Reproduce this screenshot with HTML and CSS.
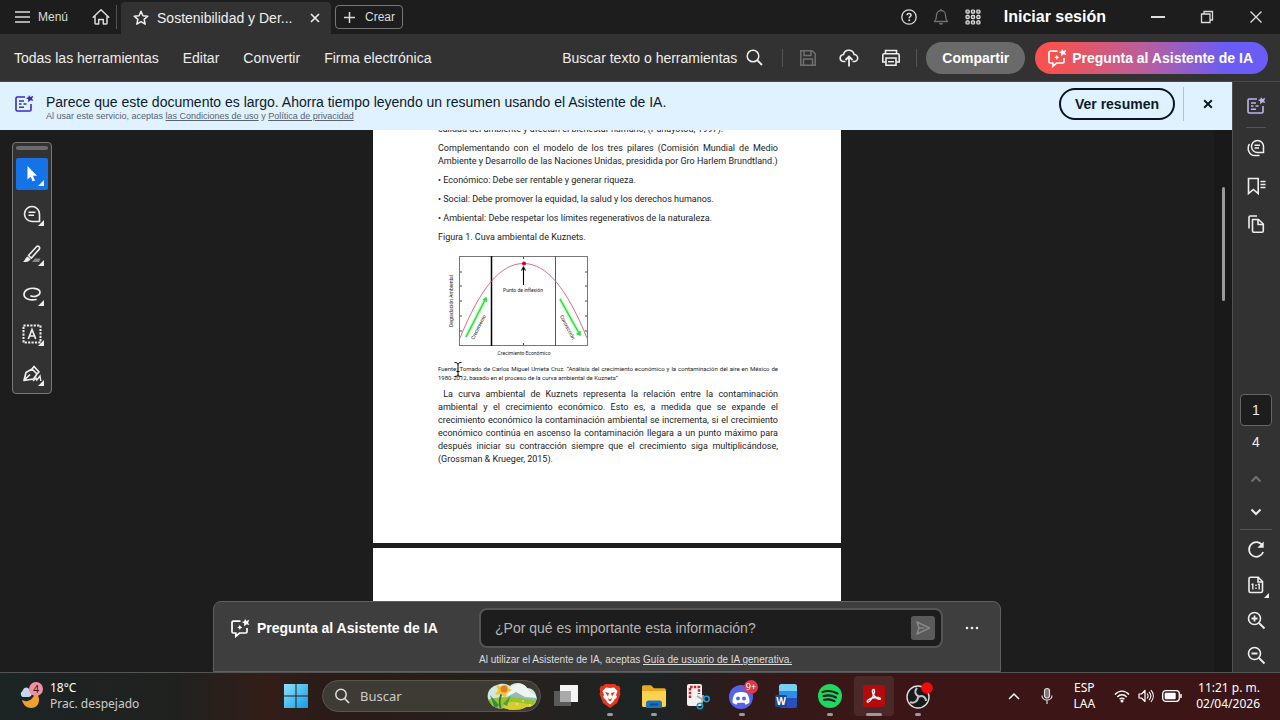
FILE: index.html
```html
<!DOCTYPE html>
<html lang="es">
<head>
  <meta charset="UTF-8">
  <meta name="viewport" content="width=device-width, initial-scale=1.0">
  <title>Sostenibilidad y Derecho</title>
  <link rel="stylesheet" href="styles.css">
</head>
<body>
  <svg width="0" height="0" class="defs">
    <symbol id="chat-ai" viewBox="0 0 20 20">
      <path d="M10.5 3.2H3.2c-.7 0-1.2.5-1.2 1.2v9.4c0 .7.500 1.200 1.200 1.200h2.600v3.300l3.700-3.300h6.300c.7 0 1.200-.5 1.200-1.200V10" fill="none" stroke="currentColor" stroke-width="1.700"/>
      <path d="M15 .8l1.300 2.200 3-1.200-1.200 2.900 1.300 2.300-2.800-.8-2.300 2-.2-2.900-2.300-1.200 2.500-.8z" fill="currentColor"/>
      <path d="M9.800 6.800l.8 1.800 1.800.8-1.800.8-.8 1.800-.8-1.800-1.800-.8 1.800-.8z" fill="currentColor"/>
    </symbol>
    <symbol id="summary-ai" viewBox="0 0 20 20">
      <path d="M11 3H3.200C2.500 3 2 3.500 2 4.200v11.600c0 .7.500 1.200 1.200 1.200h12.600c.7 0 1.200-.5 1.200-1.200V10" fill="none" stroke="currentColor" stroke-width="1.600"/>
      <path d="M5 7h5M5 10h2.500M9.500 10h3M5 13.300h5" fill="none" stroke="currentColor" stroke-width="1.500"/>
      <path d="M15 1l1.300 2 3-1.200-1.200 2.900 1.300 2.300-2.800-.8-2.300 2-.2-2.900-2.300-1.200 2.500-.8z" fill="currentColor"/>
    </symbol>
  </svg>

  <header class="titlebar">
    <button class="menu-btn" type="button">
      <svg width="15" height="14" viewBox="0 0 15 14"><path d="M0 2h15M0 7h15M0 12h15" stroke="currentColor" stroke-width="1.500"/></svg>
      Menú
    </button>
    <button class="home-btn" type="button" aria-label="Inicio">
      <svg width="18" height="18" viewBox="0 0 18 18"><path d="M1.200 9.200L9 1.800l7.800 7.400M3 8v7.300c0 .4.300.7.700.7h3v-4.500h4.600V16h3c.4 0 .7-.3.700-.7V8" fill="none" stroke="currentColor" stroke-width="1.500" stroke-linejoin="round" stroke-linecap="round"/></svg>
    </button>
    <div class="tab">
      <svg width="16" height="16" viewBox="0 0 16 16"><path d="M8 1.300l1.900 4.500 4.900.4-3.700 3.200 1.100 4.800L8 11.700l-4.200 2.500 1.100-4.800L1.200 6.200l4.900-.4z" fill="none" stroke="currentColor" stroke-width="1.500" stroke-linejoin="round"/></svg>
      <span class="tab-title">Sostenibilidad y Der...</span>
      <button type="button" aria-label="Cerrar pestaña">
        <svg width="10" height="10" viewBox="0 0 10 10"><path d="M1 1l8 8M9 1L1 9" stroke="currentColor" stroke-width="1.600"/></svg>
      </button>
    </div>
    <button class="create-btn" type="button">
      <svg width="11" height="11" viewBox="0 0 11 11"><path d="M5.500 0v11M0 5.500h11" stroke="currentColor" stroke-width="1.500"/></svg>
      Crear
    </button>
    <div class="title-actions">
      <button type="button" aria-label="Ayuda">
        <svg width="16" height="16" viewBox="0 0 16 16"><circle cx="8" cy="8" r="7.200" fill="none" stroke="currentColor" stroke-width="1.300"/><path d="M6 6.300C6.100 5 7 4.500 8 4.500s2 .6 2 1.700C10 7.500 8.200 7.600 8.200 9.200" fill="none" stroke="currentColor" stroke-width="1.500"/><circle cx="8.200" cy="11.300" r="1" fill="currentColor"/></svg>
      </button>
      <button class="dim" type="button" aria-label="Notificaciones">
        <svg width="16" height="18" viewBox="0 0 16 18"><path d="M8 1v1.500M1.500 13.500h13c-1.500-1.500-2-2.500-2-6C12.500 4.500 10.500 2.500 8 2.500s-4.500 2-4.500 5c0 3.500-.5 4.500-2 6z" fill="none" stroke="currentColor" stroke-width="1.300" stroke-linejoin="round"/><path d="M6 15h4c-.2 1.200-1 1.800-2 1.800S6.200 16.200 6 15z" fill="currentColor"/></svg>
      </button>
      <button type="button" aria-label="Aplicaciones">
        <svg width="16" height="16" viewBox="0 0 16 16"><g fill="#666" stroke="currentColor" stroke-width="1.200"><rect x="1" y="1" width="3.200" height="3.200" rx="1"/><rect x="6.400" y="1" width="3.200" height="3.200" rx="1"/><rect x="11.800" y="1" width="3.200" height="3.200" rx="1"/><rect x="1" y="6.400" width="3.200" height="3.200" rx="1"/><rect x="6.400" y="6.400" width="3.200" height="3.200" rx="1"/><rect x="11.800" y="6.400" width="3.200" height="3.200" rx="1"/><rect x="1" y="11.800" width="3.200" height="3.200" rx="1"/><rect x="6.400" y="11.800" width="3.200" height="3.200" rx="1"/><rect x="11.800" y="11.800" width="3.200" height="3.200" rx="1"/></g></svg>
      </button>
    </div>
    <a class="login" href="#">Iniciar sesión</a>
    <div class="window-controls">
      <button type="button" aria-label="Minimizar"><svg width="14" height="14" viewBox="0 0 14 14"><path d="M0 7h14" stroke="currentColor" stroke-width="2"/></svg></button>
      <button type="button" aria-label="Restaurar"><svg width="14" height="14" viewBox="0 0 14 14"><path d="M1.500 4h8.500v8.500H1.500zM4 4V1.500h8.500V10H10" fill="none" stroke="currentColor" stroke-width="1.300"/></svg></button>
      <button type="button" aria-label="Cerrar"><svg width="12" height="12" viewBox="0 0 12 12"><path d="M.5.500l11 11M11.500.500l-11 11" stroke="currentColor" stroke-width="1.400"/></svg></button>
    </div>
  </header>

  <div class="toolbar">
    <nav>
      <a href="#">Todas las herramientas</a>
      <a href="#">Editar</a>
      <a href="#">Convertir</a>
      <a href="#">Firma electrónica</a>
    </nav>
    <button class="find-btn" type="button">
      Buscar texto o herramientas
      <svg width="17" height="17" viewBox="0 0 17 17"><circle cx="7" cy="7" r="5.800" fill="none" stroke="currentColor" stroke-width="1.500"/><path d="M11.200 11.200L16 16" stroke="currentColor" stroke-width="1.800"/></svg>
    </button>
    <div class="tool-actions">
      <button class="dim" type="button" aria-label="Guardar">
        <svg width="18" height="18" viewBox="0 0 18 18"><path d="M1.800 1.800h11.400l3 3v11.400H1.800zM5 2v4.500h7V2M4.500 16v-6h9v6" fill="none" stroke="currentColor" stroke-width="1.500"/></svg>
      </button>
      <button type="button" aria-label="Subir">
        <svg width="20" height="18" viewBox="0 0 20 18"><path d="M6.500 12.500H4.800a3.500 3.500 0 0 1-.3-7C5 3 7.200 1.200 9.800 1.200c2.700 0 4.800 1.700 5.300 4.300a3.500 3.500 0 0 1 .1 7h-1.700" fill="none" stroke="currentColor" stroke-width="1.600"/><path d="M10 17.500V8M6.500 11L10 7.500l3.500 3.500" fill="none" stroke="currentColor" stroke-width="1.800"/></svg>
      </button>
      <button type="button" aria-label="Imprimir">
        <svg width="20" height="18" viewBox="0 0 20 18"><path d="M4.500 4.500V1.500h11v3M4.500 13H1.800V6.200c0-.8.600-1.400 1.400-1.400h13.600c.8 0 1.400.6 1.400 1.400V13h-2.700M5 9h10v7.200H5z" fill="none" stroke="currentColor" stroke-width="1.600"/><path d="M7 12.700h6" stroke="currentColor" stroke-width="1.400"/></svg>
      </button>
    </div>
    <button class="pill share" type="button">Compartir</button>
    <button class="pill ask-ai" type="button"><svg width="20" height="20"><use href="#chat-ai"/></svg>Pregunta al Asistente de IA</button>
  </div>

  <main>
    <div class="content">
      <section class="banner">
        <svg width="20" height="20"><use href="#summary-ai"/></svg>
        <div class="banner-text">
          <p>Parece que este documento es largo. Ahorra tiempo leyendo un resumen usando el Asistente de IA.</p>
          <small>Al usar este servicio, aceptas <a href="#">las Condiciones de uso</a> y <a href="#">Política de privacidad</a></small>
        </div>
        <button class="resume-btn" type="button">Ver resumen</button>
        <button class="banner-close" type="button" aria-label="Cerrar aviso">
          <svg width="10" height="10" viewBox="0 0 10 10"><path d="M1.200 1.200l7.600 7.600M8.800 1.200L1.200 8.800" stroke="currentColor" stroke-width="2"/></svg>
        </button>
      </section>

      <section class="viewer">
        <div class="pages">
          <article class="page first">
            <p>calidad del ambiente y afectan el bienestar humano, (Panayotou, 1997).</p>
            <p>Complementando con el modelo de los tres pilares (Comisión Mundial de Medio Ambiente y Desarrollo de las Naciones Unidas, presidida por Gro Harlem Brundtland.)</p>
            <p>• Económico: Debe ser rentable y generar riqueza.</p>
            <p>• Social: Debe promover la equidad, la salud y los derechos humanos.</p>
            <p>• Ambiental: Debe respetar los límites regenerativos de la naturaleza.</p>
            <p>Figura 1. Cuva ambiental de Kuznets.</p>
            <figure>
              <svg class="chart" width="156" height="108" viewBox="0 2 156 108">
                <rect x="21.500" y="8.500" width="128" height="89" fill="none" stroke="#777"/>
                <path d="M22 24h2M22 38h2M22 53h2M22 68h2M22 83h2M147 24h2M147 38h2M147 53h2M147 68h2M147 83h2M85.500 9v2M85.500 95v2" stroke="#444"/>
                <path d="M53.500 8v90" stroke="#000" stroke-width="1.500"/>
                <path d="M117.500 8v90" stroke="#555"/>
                <path d="M22 90C42 41 62 15.500 85.500 15.500S129 41 149 90" fill="none" stroke="#d0607a" stroke-width=".9"/>
                <circle cx="86" cy="15.500" r="2" fill="#d4002a"/>
                <path d="M85.500 37V20M83.500 22.500l2-3.500 2 3.500" fill="none" stroke="#000" stroke-width="1.100"/>
                <g fill="none" stroke="#bdfcbd" stroke-width="3.500"><path d="M28 89L48 50M122 51l20 36"/></g>
                <g fill="none" stroke="#2cdb3c" stroke-width="1.400"><path d="M28 89L48 50M45 52l3-2 .5 4M122 51l20 36M142 83v4l-3.500-1.500"/></g>
                <text x="85" y="44" text-anchor="middle">Punto de inflexión</text>
                <text x="86" y="107" text-anchor="middle">Crecimiento Económico</text>
                <text transform="translate(15 53) rotate(-90)" text-anchor="middle">Degradación Ambiental</text>
                <text transform="translate(42 80) rotate(-63)" text-anchor="middle">Crecimiento</text>
                <text transform="translate(128 80) rotate(62)" text-anchor="middle">Contracción</text>
              </svg>
              <figcaption>Fuente: Tomado de Carlos Miguel Urrieta Cruz. “Análisis del crecimiento económico y la contaminación del aire en México de 1980-2012, basado en el proceso de la curva ambiental de Kuznets”</figcaption>
            </figure>
            <p>&nbsp;La curva ambiental de Kuznets representa la relación entre la contaminación ambiental y el crecimiento económico. Esto es, a medida que se expande el crecimiento económico la contaminación ambiental se incrementa, si el crecimiento económico continúa en ascenso la contaminación llegara a un punto máximo para después iniciar su contracción siempre que el crecimiento siga multiplicándose, (Grossman &amp; Krueger, 2015).</p>
            <svg class="cursor" width="8" height="15" viewBox="0 0 8 15"><path d="M.5.500C2.500.500 4 1 4 2.500 4 1 5.500.500 7.500.500M4 2.500v10M.5 14.500c2 0 3.500-.5 3.500-2 0 1.500 1.500 2 3.500 2M2.500 9.500h3" fill="none" stroke="#000"/></svg>
          </article>
          <article class="page next"></article>
        </div>
        <div class="scrollbar"><div class="thumb"></div></div>

        <aside class="toolbox">
          <div class="grip"></div>
          <button class="active" type="button" aria-label="Seleccionar"><svg width="20" height="20" viewBox="0 0 20 20"><path d="M5.500 2v13.500l3.200-2.800 2 4.800 2.300-1-2-4.700h4z" fill="currentColor"/></svg></button>
          <button type="button" aria-label="Comentar"><svg width="20" height="20" viewBox="0 0 20 20"><path d="M10 2.500a7.500 7.500 0 1 0 0 15h7.500V10A7.500 7.500 0 0 0 10 2.500zM6.500 8.300h7M6.500 11.300h5.500" fill="none" stroke="currentColor" stroke-width="1.600"/></svg></button>
          <button type="button" aria-label="Resaltar"><svg width="20" height="20" viewBox="0 0 20 20"><path d="M10 18l3-3.500h5.500L17 18z" fill="#888"/><path d="M6.500 11.500l8-8.800c1.800-1.400 4 .6 2.800 2.400l-8 9z" fill="none" stroke="currentColor" stroke-width="1.600" stroke-linejoin="round"/><path d="M5.500 12.500l3 2.700c-.8 2.300-4.500 3-7.500 2.800 2-1.500 2.300-4.500 4.500-5.500z" fill="currentColor"/></svg></button>
          <button type="button" aria-label="Dibujar"><svg width="20" height="20" viewBox="0 0 20 20"><path d="M14 15.500c-5 1.200-12-.3-12-5C2 6 7.500 4 12 4.300c4 .2 6.300 2.200 6 4.500-.3 2.600-5 4.600-9 3.200" fill="none" stroke="currentColor" stroke-width="1.700" stroke-linecap="round"/></svg></button>
          <button type="button" aria-label="Texto"><svg width="20" height="20" viewBox="0 0 20 20"><rect x="1.500" y="1.500" width="17" height="17" fill="none" stroke="currentColor" stroke-width="2" stroke-dasharray="2.200 1.200"/><path d="M6.300 15L10 5.500l3.700 9.500M7.500 12h5" fill="none" stroke="currentColor" stroke-width="1.700"/></svg></button>
          <button type="button" aria-label="Firmar"><svg width="20" height="20" viewBox="0 0 20 20"><path d="M2 16.500l2-8 6-3.500 5 5-3.500 5zM10 5l2-2.500L17 8l-2 2M3 15.500l5-5" fill="none" stroke="currentColor" stroke-width="1.700" stroke-linejoin="round"/><path d="M11 17l3-3 .8 2L18 12l.8 5" fill="none" stroke="currentColor" stroke-width="1.400"/></svg></button>
        </aside>

        <form class="ai-panel">
          <label for="prompt"><svg width="20" height="20"><use href="#chat-ai"/></svg>Pregunta al Asistente de IA</label>
          <div class="prompt-box">
            <input type="text" id="prompt" placeholder="¿Por qué es importante esta información?">
            <button type="button" aria-label="Enviar"><svg width="16" height="16" viewBox="0 0 16 16"><path d="M2 2l12.500 6L2 14l2-6zM4 8h5" fill="none" stroke="currentColor" stroke-width="1.500" stroke-linejoin="round"/></svg></button>
          </div>
          <button class="more-btn" type="button" aria-label="Más opciones"><svg width="14" height="4" viewBox="0 0 14 4"><g fill="currentColor"><circle cx="2" cy="2" r="1.300"/><circle cx="7" cy="2" r="1.300"/><circle cx="12" cy="2" r="1.300"/></g></svg></button>
          <p class="terms">Al utilizar el Asistente de IA, aceptas <a href="#">Guía de usuario de IA generativa.</a></p>
        </form>
      </section>
    </div>

    <aside class="rail">
      <button class="lilac" type="button" aria-label="Resumen"><svg width="20" height="20"><use href="#summary-ai"/></svg></button>
      <hr>
      <button type="button" aria-label="Comentarios"><svg width="20" height="20" viewBox="0 0 20 20"><path d="M11.500 2.500a6 6 0 1 0 0 12h6v-6a6 6 0 0 0-6-6zM8.500 7.300h5.500M8.500 10h4.500" fill="none" stroke="currentColor" stroke-width="1.500"/><path d="M3.500 6C.5 10.500 3 17.500 9 17.500h4.500" fill="none" stroke="currentColor" stroke-width="1.500"/></svg></button>
      <button type="button" aria-label="Marcadores"><svg width="20" height="20" viewBox="0 0 20 20"><path d="M2.500 2.500h9.700v15l-4.800-4-4.900 4z" fill="none" stroke="currentColor" stroke-width="1.600"/><path d="M14.500 5.500h5M14.500 8.500h5M14.500 11.500h5" stroke="currentColor" stroke-width="1.400"/></svg></button>
      <button type="button" aria-label="Páginas"><svg width="20" height="20" viewBox="0 0 20 20"><path d="M6.500 5.500h6l4.800 4.500v7c0 .8-.5 1.300-1.300 1.300H7.800c-.8 0-1.300-.5-1.300-1.300zM12 6v4.500h5" fill="none" stroke="currentColor" stroke-width="1.600" stroke-linejoin="round"/><path d="M3 14.500V3.300C3 2.500 3.500 2 4.300 2H11" fill="none" stroke="currentColor" stroke-width="1.600"/></svg></button>
      <div class="page-nav">
        <input type="text" value="1" aria-label="Página">
        <span>4</span>
        <button class="dim" type="button" aria-label="Página anterior"><svg width="12" height="8" viewBox="0 0 12 8"><path d="M1.500 6.500L6 2l4.500 4.500" fill="none" stroke="currentColor" stroke-width="2"/></svg></button>
        <button type="button" aria-label="Página siguiente"><svg width="12" height="8" viewBox="0 0 12 8"><path d="M1.500 1.500L6 6l4.500-4.500" fill="none" stroke="currentColor" stroke-width="2"/></svg></button>
      </div>
      <div class="zoom">
        <button type="button" aria-label="Girar"><svg width="20" height="20" viewBox="0 0 20 20"><path d="M16.500 5.500A7.300 7.300 0 1 0 17.200 12" fill="none" stroke="currentColor" stroke-width="1.700"/><path d="M17.700 1.500v6.300h-6.300z" fill="currentColor"/></svg></button>
        <button class="corner" type="button" aria-label="Tamaño real"><svg width="20" height="20" viewBox="0 0 20 20"><path d="M4.500 2.200h7.700l4.300 4.300V16c0 1-.5 1.500-1.500 1.500H4.500C3.500 17.500 3 17 3 16V3.700c0-1 .5-1.500 1.500-1.500zM12 2.500V7h4.500" fill="none" stroke="currentColor" stroke-width="1.600"/><path d="M6.800 8.500v6M13.200 8.500v6M5.500 9.800l1.300-1M11.900 9.800l1.300-1M10 9.500v1.500M10 12.500V14" stroke="currentColor" stroke-width="1.400"/></svg></button>
        <button type="button" aria-label="Acercar"><svg width="20" height="20" viewBox="0 0 20 20"><circle cx="8.500" cy="8.500" r="6" fill="none" stroke="currentColor" stroke-width="1.600"/><path d="M13 13l5.500 5.500M5.500 8.500h6M8.500 5.500v6" stroke="currentColor" stroke-width="1.800"/></svg></button>
        <button type="button" aria-label="Alejar"><svg width="20" height="20" viewBox="0 0 20 20"><circle cx="8.500" cy="8.500" r="6" fill="none" stroke="currentColor" stroke-width="1.600"/><path d="M13 13l5.500 5.500M5.500 8.500h6" stroke="currentColor" stroke-width="1.800"/></svg></button>
      </div>
    </aside>
  </main>

  <footer class="taskbar">
    <div class="weather">
      <svg width="24" height="28" viewBox="0 0 24 28"><path d="M3 18c5 3 11 0 13-7 6 2 6 15-4 15-4 0-8-3-9-8z" fill="#f0a02e"/><path d="M3.500 15a3.500 3.500 0 0 1 0-6C5 4 10 5 10.500 8.500 14 9 13.500 15 10 15z" fill="#c5d6f2"/><circle cx="17" cy="7" r="7" fill="#f58fa0"/><text x="17" y="11" text-anchor="middle" class="count">4</text></svg>
      <p>18°C<br><span>Prac. despejado</span></p>
    </div>
    <div class="apps">
      <button type="button" aria-label="Inicio"><svg width="24" height="24" viewBox="0 0 24 24"><defs><linearGradient id="win" x2="1" y2="1"><stop stop-color="#8ce3fb"/><stop offset="1" stop-color="#119be8"/></linearGradient></defs><path d="M0 0h11.500v11.500H0zM12.500 0H24v11.500H12.500zM0 12.500h11.500V24H0zM12.500 12.500H24V24H12.500z" fill="url(#win)"/></svg></button>
      <div class="win-search">
        <svg width="16" height="16" viewBox="0 0 16 16"><circle cx="7" cy="6.500" r="5.200" fill="none" stroke="#ddd" stroke-width="1.500"/><path d="M10.700 10.500L15 15" stroke="#ddd" stroke-width="1.800"/></svg>
        <input type="text" placeholder="Buscar" aria-label="Buscar">
        <svg width="50" height="28" viewBox="0 0 50 28"><defs><clipPath id="hill"><path d="M1 17C-1 8 6 4 10 3c6-3 12 0 13 1 5-5 14-3 17 2 7 0 11 7 9 13-1 5-7 6-10 6-7 4-17 3-22 1C9 28 3 23 1 17z"/></clipPath></defs><g clip-path="url(#hill)"><path d="M0 0h50v28H0z" fill="#cfe9e2"/><path d="M22 8c5-8 16-8 20 1l8 6v4H20z" fill="#eef5f1"/><path d="M20 15l9-5 9 5 12 1v4H20z" fill="#8fbdb8"/><path d="M0 18c14-5 30-3 50 1v9H0z" fill="#9cc22d"/><path d="M14 28c6-12 15-8 36-4v4z" fill="#d4cd31"/><path d="M0 15l8 13H0zM8 27L3 13l9 10z" fill="#358a4c"/><path d="M13 28c-2-9-1-12 1-18l2 1c-3 6-3 10-1 17z" fill="#2f7736"/><path d="M16 22l8-9-4 11z" fill="#579c35"/><path d="M9 3l6 2 5-4 1 5 4 2-5 3-2 5-4-4-6 1 3-5z" fill="#f4c232"/><circle cx="17" cy="7" r="3.500" fill="#df7f22"/><g fill="#f5e46f"><circle cx="30" cy="22" r="1"/><circle cx="36" cy="19" r="1"/><circle cx="43" cy="23" r="1"/></g></g></svg>
      </div>
      <button type="button" aria-label="Vista de tareas"><svg width="26" height="24" viewBox="0 0 26 24"><path d="M7 1h18v17H7z" fill="#f4f4f4"/><path d="M1 7h17v15H1z" fill="#5a5a5a"/><path d="M7 7h11v11H7z" fill="#aaa"/></svg></button>
      <button class="running" type="button" aria-label="Brave"><svg width="22" height="26" viewBox="0 0 22 26"><path d="M6 1h10l2 2 2-.3L21.500 6l-.8 2 .8 3-3.500 9-7 5-7-5L.5 11l.8-3-.8-2L2 2.700l2 .3z" fill="#e7351b"/><path d="M11 5l4-.5L18.500 8 17 12l1 2-3 3-1 2-3 2.500L8 19l-1-2-3-3 1-2-1.500-4L7 4.500z" fill="#fff"/><path d="M6 9l4 1-1 3.500zM16 9l-4 1 1 3.500zM9 15l2 1.500 2-1.500-1 3h-2z" fill="#d83a22"/></svg></button>
      <button class="running" type="button" aria-label="Archivos"><svg width="26" height="26" viewBox="0 0 26 26"><path d="M1 4c0-1 .7-1.700 1.700-1.700H10l3 3h10c1.200 0 2 .8 2 2V22c0 1.200-.8 2-2 2H3c-1.200 0-2-.8-2-2z" fill="#e9a820"/><path d="M1 8h24v14c0 1.200-.8 2-2 2H3c-1.200 0-2-.8-2-2z" fill="#fcd251"/><path d="M5 25v-5c0-1.500 1-2.500 2.500-2.500h11c1.500 0 2.500 1 2.500 2.500v5z" fill="#1b73bd"/><path d="M9 21.500h8" stroke="#0d4d8c" stroke-width="2"/></svg></button>
      <button type="button" aria-label="Recortes"><svg width="26" height="28" viewBox="0 0 26 28"><rect x="2" y="2" width="15" height="22" rx="2" fill="#f1f1f1"/><path d="M5 16V5h9v7" fill="none" stroke="#c1272d" stroke-width="2.500" stroke-dasharray="2.500 1.200"/><path d="M12 14l8 5M18 13l-1 8" stroke="#aaa" stroke-width="1.800"/><circle cx="21.500" cy="17" r="2.700" fill="none" stroke="#209bd1" stroke-width="1.500"/><circle cx="15" cy="24" r="2.700" fill="none" stroke="#209bd1" stroke-width="1.500"/></svg></button>
      <button class="running" type="button" aria-label="Discord"><svg width="32" height="32" viewBox="0 0 32 32"><circle cx="15" cy="17" r="12" fill="#5563e8"/><path d="M9 13.500c3-2 9-2 12 0 2 3 2.700 6 2.400 9-1.500 1.500-3 2-4 2l-1-1.800h-6.800l-1 1.800c-1 0-2.500-.5-4-2-.3-3 .4-6 2.400-9z" fill="#fff"/><circle cx="12" cy="18.500" r="1.900" fill="#5563e8"/><circle cx="18" cy="18.500" r="1.900" fill="#5563e8"/><circle cx="25" cy="7" r="7" fill="#d63d49"/><text x="25" y="10" text-anchor="middle" class="alerts">9+</text></svg></button>
      <button type="button" aria-label="Word"><svg width="24" height="26" viewBox="0 0 24 26"><path d="M7 1h14c1 0 2 1 2 2v6H5V3c0-1 1-2 2-2z" fill="#76cff5"/><path d="M5 8h18v8H5z" fill="#2d8eea"/><path d="M5 15h18v8c0 1-1 2-2 2H7c-1 0-2-1-2-2z" fill="#2451ba"/><rect x="1" y="12" width="12" height="12" rx="1.500" fill="#15499f"/><text x="7" y="21.500" text-anchor="middle" class="word">W</text></svg></button>
      <button class="running" type="button" aria-label="Spotify"><svg width="24" height="24" viewBox="0 0 24 24"><circle cx="12" cy="12" r="12" fill="#20d760"/><path d="M4.500 8c5-1.700 10.500-1 15 1.500M5.500 12c4.500-1.300 9-.7 12.500 1.500M6.200 15.800c3.800-1 7.300-.5 10.300 1.300" fill="none" stroke="#142018" stroke-width="2.200" stroke-linecap="round"/></svg></button>
      <button class="running current" type="button" aria-label="Acrobat"><svg width="22" height="22" viewBox="0 0 22 22"><rect width="22" height="22" rx="3" fill="#b30b0b"/><path d="M4.500 17c-1.500-1 2-3.500 6-4.200s7-.3 7 1c0 1.500-4 .2-6.500-3C9 8 8.900 4.500 10.500 4.500c2 0 .7 5-1.500 8.500-1.500 2.500-3.500 4.500-4.500 4z" fill="none" stroke="#fff" stroke-width="1.400"/></svg></button>
      <button class="running" type="button" aria-label="OBS"><svg width="30" height="32" viewBox="0 0 30 32"><circle cx="15" cy="17" r="11" fill="#17191c" stroke="#ddd" stroke-width="1.400"/><g fill="none" stroke="#c3c3c3" stroke-width="2"><path d="M14 8c-3 3-2 7 2 8.500M23 21c0-4-4-6.500-7.500-4M7 22c4 2 8-1 8-5"/></g><circle cx="24" cy="8" r="5.800" fill="#f20b0b"/></svg></button>
    </div>
    <div class="tray">
      <svg width="12" height="8" viewBox="0 0 12 8"><path d="M1 7l5-5 5 5" fill="none" stroke="#fff" stroke-width="1.500"/></svg>
      <svg width="12" height="18" viewBox="0 0 12 18"><rect x="3.500" y="1.500" width="5" height="9.500" rx="2.500" fill="#777" stroke="#ddd" stroke-width="1.200"/><path d="M1 8.500c0 6 10 6 10 0M6 13v4" fill="none" stroke="#ddd" stroke-width="1.200"/></svg>
      <p class="lang">ESP<br>LAA</p>
      <div class="status">
        <svg width="16" height="14" viewBox="0 0 16 14"><path d="M1 5.500c4-4.500 10-4.500 14 0M3.300 8c2.800-3 6.600-3 9.400 0M5.600 10.300c1.500-1.600 3.300-1.600 4.800 0" fill="none" stroke="#fff" stroke-width="1.400"/><circle cx="8" cy="12" r="1.500" fill="#fff"/></svg>
        <svg width="16" height="14" viewBox="0 0 16 14"><path d="M1 5h2.500L7 1.500v11L3.500 9H1z" fill="none" stroke="#fff" stroke-width="1.200" stroke-linejoin="round"/><path d="M9 4.500c1.300 1.500 1.300 3.500 0 5M11 2.800c2.200 2.500 2.200 5.900 0 8.400M13 1.200c3 3.500 3 8.100 0 11.600" fill="none" stroke="#fff" stroke-width="1.100"/></svg>
        <svg width="20" height="12" viewBox="0 0 20 12"><rect x=".7" y=".7" width="16.600" height="10.600" rx="3" fill="none" stroke="#fff" stroke-width="1.300"/><rect x="2.700" y="2.700" width="11" height="6.600" rx="1" fill="#fff"/><path d="M19 4v4" stroke="#fff" stroke-width="1.500"/></svg>
      </div>
      <p class="clock">11:21 p. m.<br>02/04/2026</p>
    </div>
  </footer>
</body>
</html>
```
FILE: styles.css
```css
* {
  box-sizing: border-box;
}

body {
  display: flex;
  flex-direction: column;
  height: 100vh;
  margin: 0;
  overflow: hidden;
  font-family: "Liberation Sans", Arial, sans-serif;
  font-size: 14px;
  color: #eee;
  background: #1d1d1d;
}

.defs {
  position: absolute;
}

p,
figure {
  margin: 0;
}

a {
  color: inherit;
}

svg {
  display: block;
  flex: none;
}

button {
  display: flex;
  align-items: center;
  justify-content: center;
  padding: 0;
  border: 0;
  background: none;
  color: inherit;
  font: inherit;
  cursor: pointer;
}

input {
  min-width: 0;
  border: 0;
  outline: 0;
  background: none;
  color: inherit;
  font: inherit;
}

.dim {
  color: #707070;
}

/* title bar */
.titlebar {
  display: flex;
  align-items: center;
  flex: none;
  height: 34px;
  padding-left: 15px;
  color: #dcdcdc;
}

.menu-btn {
  gap: 8px;
  font-size: 12px;
}

.home-btn {
  height: 24px;
  margin-left: 24px;
  padding-right: 6px;
  border-right: 1px solid #555;
}

.tab {
  display: flex;
  align-items: center;
  align-self: flex-end;
  gap: 8px;
  width: 210px;
  height: 32px;
  margin: 0 4px;
  padding: 0 11px 0 12px;
  border-radius: 4px 4px 0 0;
  background: #323232;
  color: #f0f0f0;
}

.tab-title {
  flex: 1;
  white-space: nowrap;
}

.create-btn {
  gap: 10px;
  height: 24px;
  padding: 0 7px 0 8px;
  border: 1px solid #777;
  border-radius: 4px;
  font-size: 12px;
}

.title-actions {
  display: flex;
  align-items: center;
  gap: 16px;
  margin-left: auto;
}

.login {
  margin-left: 23px;
  font-size: 16px;
  font-weight: bold;
  color: #fff;
  text-decoration: none;
}

.window-controls {
  display: flex;
  margin-left: 27px;
}

.window-controls button {
  width: 49px;
  height: 30px;
}

/* toolbar */
.toolbar {
  display: flex;
  align-items: center;
  flex: none;
  height: 48px;
  padding: 0 12px 0 14px;
  border-bottom: 1px solid #4a4a4a;
  background: #323232;
}

.toolbar nav {
  display: flex;
  gap: 24px;
}

.toolbar nav a {
  text-decoration: none;
}

.find-btn {
  gap: 9px;
  margin-left: auto;
}

.tool-actions {
  display: flex;
  gap: 22px;
  margin: 0 9px 0 19px;
  padding: 0 15px 0 16px;
  border: solid #555;
  border-width: 0 1px;
}

.pill {
  height: 32px;
  padding: 0 16px;
  border-radius: 16px;
  background: #6a6a6a;
  color: #fff;
  font-weight: bold;
}

.ask-ai {
  gap: 5px;
  margin-left: 10px;
  padding: 0 15px 0 12px;
  background: linear-gradient(90deg, #f7524f 8%, #b75f9f 48%, #6b5cf5 82%);
}

main {
  display: flex;
  flex: 1;
  min-height: 0;
}

.content {
  display: flex;
  flex-direction: column;
  flex: 1;
  min-width: 0;
}

/* notice */
.banner {
  display: flex;
  align-items: center;
  flex: none;
  height: 48px;
  padding: 0 19px 4px 14px;
  background: #e0f2ff;
  color: #0c1a2a;
}

.banner > svg {
  color: #3b2fb5;
}

.banner-text {
  flex: 1;
  margin-left: 12px;
  padding-top: 8px;
}

.banner-text p {
  line-height: 16px;
}

.banner-text small {
  display: block;
  font-size: 9px;
  line-height: 12px;
  color: #56636f;
}

.resume-btn {
  height: 32px;
  padding: 0 14px;
  border: 2px solid #0b1420;
  border-radius: 16px;
  font-weight: bold;
}

.banner-close {
  height: 34px;
  margin-left: 8px;
  padding-left: 19px;
  border-left: 1px solid #b4c3cf;
}

/* document */
.viewer {
  position: relative;
  display: flex;
  flex: 1;
  min-height: 0;
  overflow: hidden;
}

.pages {
  flex: 1;
  margin-top: -7px;
}

.page {
  position: relative;
  width: 468px;
  margin: 0 auto 5px;
  padding: 0 63px 77px 65px;
  background: #fff;
  color: #222;
  font-family: Roboto, "Liberation Sans", sans-serif;
  font-size: 9px;
  line-height: 13px;
  text-align: justify;
}

.page p {
  margin-bottom: 6px;
}

.page p:last-of-type {
  margin-bottom: 0;
}

.next {
  height: 200px;
}

.chart {
  margin-bottom: 6px;
}

.chart text {
  font-size: 5px;
  fill: #222;
}

figcaption {
  margin-bottom: 6px;
  font-size: 6px;
  line-height: 9px;
}

.cursor {
  position: absolute;
  left: 81px;
  top: 239px;
}

.scrollbar {
  width: 18px;
  padding: 57px 7px 0 8px;
  background: #191919;
}

.thumb {
  height: 114px;
  border-radius: 2px;
  background: #9a9a9a;
}

.toolbox {
  position: absolute;
  left: 12px;
  top: 12px;
  display: flex;
  flex-direction: column;
  gap: 8px;
  width: 40px;
  padding: 3px;
  border: 1px solid #777;
  border-radius: 4px;
  background: #323232;
}

.grip {
  height: 4px;
  border-radius: 2px;
  background: #6b6b6b;
}

.toolbox button {
  position: relative;
  height: 32px;
  border-radius: 2px;
}

.toolbox .active {
  background: #1473e6;
  color: #fff;
}

.toolbox button::after,
.corner::after {
  content: "";
  position: absolute;
  right: 4px;
  bottom: 4px;
  border-left: 6px solid transparent;
  border-bottom: 6px solid #eee;
}

/* assistant */
.ai-panel {
  position: absolute;
  left: 213px;
  right: 231px;
  bottom: 0;
  display: grid;
  grid-template-columns: 249px 1fr 57px;
  align-items: center;
  row-gap: 5px;
  padding: 6px 0 4px 16px;
  border: 1px solid #606060;
  border-radius: 8px 8px 0 0;
  background: #3e3e3e;
}

.ai-panel label {
  display: flex;
  align-items: center;
  gap: 7px;
  font-weight: bold;
  color: #fff;
}

.prompt-box {
  display: flex;
  align-items: center;
  height: 40px;
  padding: 0 6px 0 14px;
  border: 2px solid #555;
  border-radius: 8px;
  background: #1d1d1d;
}

.prompt-box input {
  flex: 1;
  padding: 0;
}

.prompt-box input::placeholder {
  color: #b5b5b5;
}

.prompt-box button {
  width: 24px;
  height: 24px;
  border-radius: 3px;
  background: #5a5a5a;
  color: #888;
}

.more-btn {
  height: 24px;
}

.terms {
  grid-column: 2;
  font-size: 10px;
  line-height: 14px;
  color: #ddd;
}

/* right rail */
.rail {
  display: flex;
  flex-direction: column;
  align-items: center;
  width: 48px;
  padding: 13px 1px 6px 0;
  border-left: 1px solid #505050;
  background: #323232;
}

.rail button {
  position: relative;
  width: 32px;
  height: 22px;
  margin-bottom: 16px;
}

.rail .lilac {
  margin-bottom: 10px;
  color: #bdb4f0;
}

.rail hr {
  width: 20px;
  margin: 0 0 9px;
  border: 0;
  border-top: 1px solid #555;
}

.page-nav {
  display: flex;
  flex-direction: column;
  align-items: center;
  width: 32px;
  margin-top: auto;
}

.page-nav input {
  width: 32px;
  height: 32px;
  padding: 0;
  border: 1px solid #666;
  border-radius: 4px;
  background: #1d1d1d;
  text-align: center;
}

.page-nav span {
  margin: 8px 0 18px;
  line-height: 16px;
}

.page-nav button {
  margin-bottom: 11px;
}

.page-nav button:last-child {
  margin-bottom: 6px;
}

.zoom {
  padding-top: 9px;
  border-top: 1px solid #555;
}

.zoom button {
  margin-bottom: 13px;
}

.zoom button:last-child {
  margin-bottom: 0;
}

.corner::after {
  right: 3px;
  bottom: -2px;
  border-width: 0 0 5px 5px;
}

/* windows taskbar */
.taskbar {
  display: flex;
  align-items: center;
  flex: none;
  height: 48px;
  padding: 0 20px 2px 19px;
  border-top: 1px solid #555;
  background: linear-gradient(90deg, #1c2424 0, #20211f 14%, #331e17 21%, #291b18 26%, #25211e 42%, #1c2424 51%, #301a1a 58%, #3c1616 68%, #3c1616 100%);
  color: #fff;
  font-family: "Noto Sans", "Open Sans", sans-serif;
  font-size: 12px;
  line-height: 16px;
}

.weather {
  display: flex;
  align-items: center;
  gap: 7px;
  flex: 0 0 255px;
}

.weather span {
  color: #ccc;
}

.weather .count {
  font-size: 10px;
  fill: #222;
}

.apps {
  display: flex;
  align-items: center;
}

.apps button {
  position: relative;
  width: 44px;
  height: 40px;
}

.running::after {
  content: "";
  position: absolute;
  bottom: 0;
  width: 6px;
  height: 3px;
  border-radius: 2px;
  background: #9a9a9a;
}

.apps .current {
  width: 40px;
  margin: 0 2px;
  border-radius: 4px;
  background: #4b2929;
}

.current::after {
  width: 16px;
}

.alerts {
  font-size: 9px;
  fill: #fff;
}

.word {
  font-size: 10px;
  font-weight: bold;
  fill: #fff;
}

.win-search {
  display: flex;
  align-items: center;
  width: 219px;
  height: 32px;
  margin: 0 3px 0 4px;
  padding: 0 3px 0 11px;
  border: 1px solid #57574c;
  border-radius: 16px;
  background: #3d3b33;
}

.win-search input {
  flex: 1;
  padding: 0 0 0 10px;
  font-size: 13px;
}

.win-search input::placeholder {
  color: #ccc;
}

.tray {
  display: flex;
  align-items: center;
  margin-left: auto;
}

.tray > svg {
  margin-right: 21px;
}

.lang {
  margin-right: 19px;
  text-align: center;
}

.status {
  display: flex;
  align-items: center;
  gap: 8px;
  margin-right: 14px;
}

.clock {
  text-align: right;
}
```
